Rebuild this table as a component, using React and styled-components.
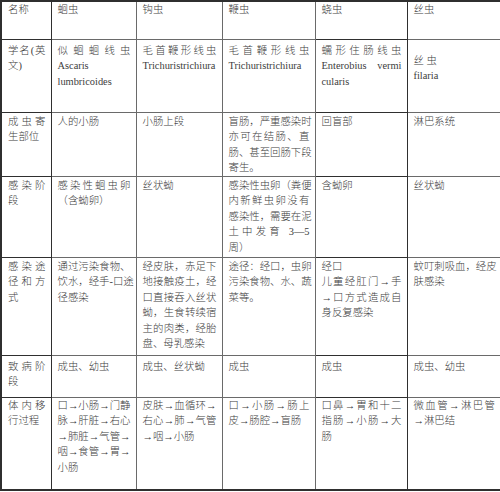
import styled, { createGlobalStyle } from 'styled-components';

const GlobalStyle = createGlobalStyle`
  html, body {
    margin: 0;
    padding: 0;
    background: #fff;
  }
`;

const Table = styled.table`
  width: 500px;
  table-layout: fixed;
  border-collapse: collapse;
  border: 2px solid #2f2f2f;
  font-family: "Liberation Serif", "Noto Sans CJK SC", serif;
  font-size: 10.4px;
  font-weight: 300;
  line-height: 15.5px;
  color: #404040;
`;

const Row = styled.tr`
  height: ${(p) => p.$h}px;
`;

const Cell = styled.td`
  vertical-align: top;
  padding: ${(p) => p.$pad}px 5px 0 6px;
  border: 1px solid ${(p) => (p.$dark ? '#2f2f2f' : '#6a6a6a')};
  overflow: hidden;
`;

const Line = styled.div`
  white-space: nowrap;
  text-align: left;
  text-align-last: ${(p) => (p.$justify ? 'justify' : 'left')};
  text-justify: inter-character;
`;

const COLS = [50, 85, 86, 93, 92, 94];

// each cell: list of paragraphs, each paragraph a list of lines;
// every line but the last of a paragraph is justified ('' forces the one before it)
const ROWS = [
  {
    h: 38,
    pad: 0,
    cells: [[['名称']], [['蛔虫']], [['钩虫']], [['鞭虫']], [['蛲虫']], [['丝虫']]],
  },
  {
    h: 73,
    pad: 3,
    cells: [
      [['学名(英', '文)']],
      [['似蛔蛔线虫', ''], ['Ascaris', 'lumbricoides']],
      [['毛首鞭形线虫', ''], ['Trichuristrichiura']],
      [['毛首鞭形线虫', ''], ['Trichuristrichiura']],
      [['蠕形住肠线虫', ''], ['Enterobius vermi', 'cularis']],
      [['丝 虫'], ['filaria']],
    ],
    extra: { 5: 10 },
  },
  {
    h: 64,
    pad: 1,
    cells: [
      [['成虫寄', '生部位']],
      [['人的小肠']],
      [['小肠上段']],
      [['盲肠，严重感染时', '亦可在结肠、直', '肠、甚至回肠下段', '寄生。']],
      [['回盲部']],
      [['淋巴系统']],
    ],
  },
  {
    h: 81,
    pad: 1,
    cells: [
      [['感染阶', '段']],
      [['感染性蛔虫卵', '（含蚴卵）']],
      [['丝状蚴']],
      [['感染性虫卵（粪便', '内新鲜虫卵没有', '感染性，需要在泥', '土中发育 3—5', '周）']],
      [['含蚴卵']],
      [['丝状蚴']],
    ],
  },
  {
    h: 98,
    pad: 1,
    cells: [
      [['感染途', '径和方', '式']],
      [['通过污染食物、', '饮水，经手-口途', '径感染']],
      [['经皮肤，赤足下', '地接触疫土，经', '口直接吞入丝状', '蚴，生食转续宿', '主的肉类，经胎', '盘、母乳感染']],
      [['途径：经口，虫卵', '污染食物、水、蔬', '菜等。']],
      [['经口'], ['儿童经肛门→手', '→口方式造成自', '身反复感染']],
      [['蚊叮刺吸血，经皮', '肤感染']],
    ],
  },
  {
    h: 42,
    pad: 3,
    cells: [
      [['致病阶', '段']],
      [['成虫、幼虫']],
      [['成虫、丝状蚴']],
      [['成虫']],
      [['成虫']],
      [['成虫、幼虫']],
    ],
  },
  {
    h: 93,
    pad: 0,
    cells: [
      [['体内移', '行过程']],
      [['口→小肠→门静', '脉→肝脏→右心', '→肺脏→气管→', '咽→食管→胃→', '小肠']],
      [['皮肤→血循环→', '右心→肺→气管', '→咽→小肠']],
      [['口→小肠→肠上', '皮→肠腔→盲肠']],
      [['口鼻→胃和十二', '指肠→小肠→大', '肠']],
      [['微血管→淋巴管', '→淋巴结']],
    ],
  },
];

function CellText({ paragraphs }) {
  return paragraphs.map((lines, pi) => {
    const forced = lines[lines.length - 1] === '';
    const shown = lines.filter((l) => l !== '');
    return shown.map((line, li) => (
      <Line key={`${pi}-${li}`} $justify={forced || li < shown.length - 1}>
        {line}
      </Line>
    ));
  });
}

export default function App() {
  return (
    <>
      <GlobalStyle />
      <Table>
        <colgroup>
          {COLS.map((w, i) => (
            <col key={i} style={{ width: w }} />
          ))}
        </colgroup>
        <tbody>
          {ROWS.map((row, ri) => (
            <Row key={ri} $h={row.h}>
              {row.cells.map((cell, ci) => (
                <Cell
                  key={ci}
                  $pad={row.pad + ((row.extra && row.extra[ci]) || 0)}
                  $dark={ci === 0 || ci === 4}
                >
                  <CellText paragraphs={cell} />
                </Cell>
              ))}
            </Row>
          ))}
        </tbody>
      </Table>
    </>
  );
}
